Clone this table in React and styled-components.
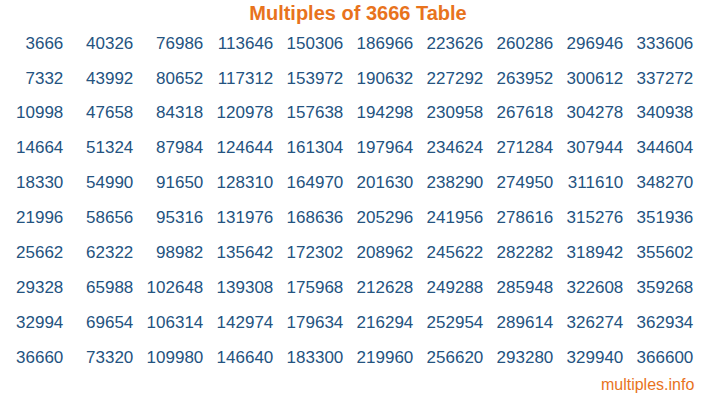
import React from "react";
import styled, { createGlobalStyle } from "styled-components";

const GlobalStyle = createGlobalStyle`
  html, body {
    margin: 0;
    padding: 0;
    background: #ffffff;
  }
  body {
    font-family: "Liberation Sans", Arial, sans-serif;
  }
`;

const Page = styled.div`
  width: 716px;
  height: 400px;
  overflow: hidden;
  display: flex;
  flex-direction: column;
`;

const Title = styled.h1`
  margin: 0 0 1.66px 0;
  padding-top: 1px;
  font-size: 20px;
  line-height: 24px;
  font-weight: bold;
  text-align: center;
  color: #e8731d;
`;

const Grid = styled.div`
  display: grid;
  grid-template-columns: repeat(10, 70px);
  grid-template-rows: repeat(10, 34.9px);
  grid-auto-flow: column;
  padding-left: 3.3px;
`;

const Cell = styled.div`
  padding-right: 10px;
  text-align: right;
  font-size: 17px;
  line-height: 34.9px;
  color: #24537f;
  white-space: nowrap;
`;

const Footer = styled.div`
  padding-right: 21.7px;
  text-align: right;
  font-size: 16px;
  line-height: 18px;
  color: #e8731d;
`;

const BASE = 3666;

export default function App() {
  const values = [];
  for (let i = 1; i <= 100; i++) values.push(BASE * i);

  return (
    <>
      <GlobalStyle />
      <Page>
        <Title>Multiples of {BASE} Table</Title>
        <Grid>
          {values.map((v) => (
            <Cell key={v}>{v}</Cell>
          ))}
        </Grid>
        <Footer>multiples.info</Footer>
      </Page>
    </>
  );
}
